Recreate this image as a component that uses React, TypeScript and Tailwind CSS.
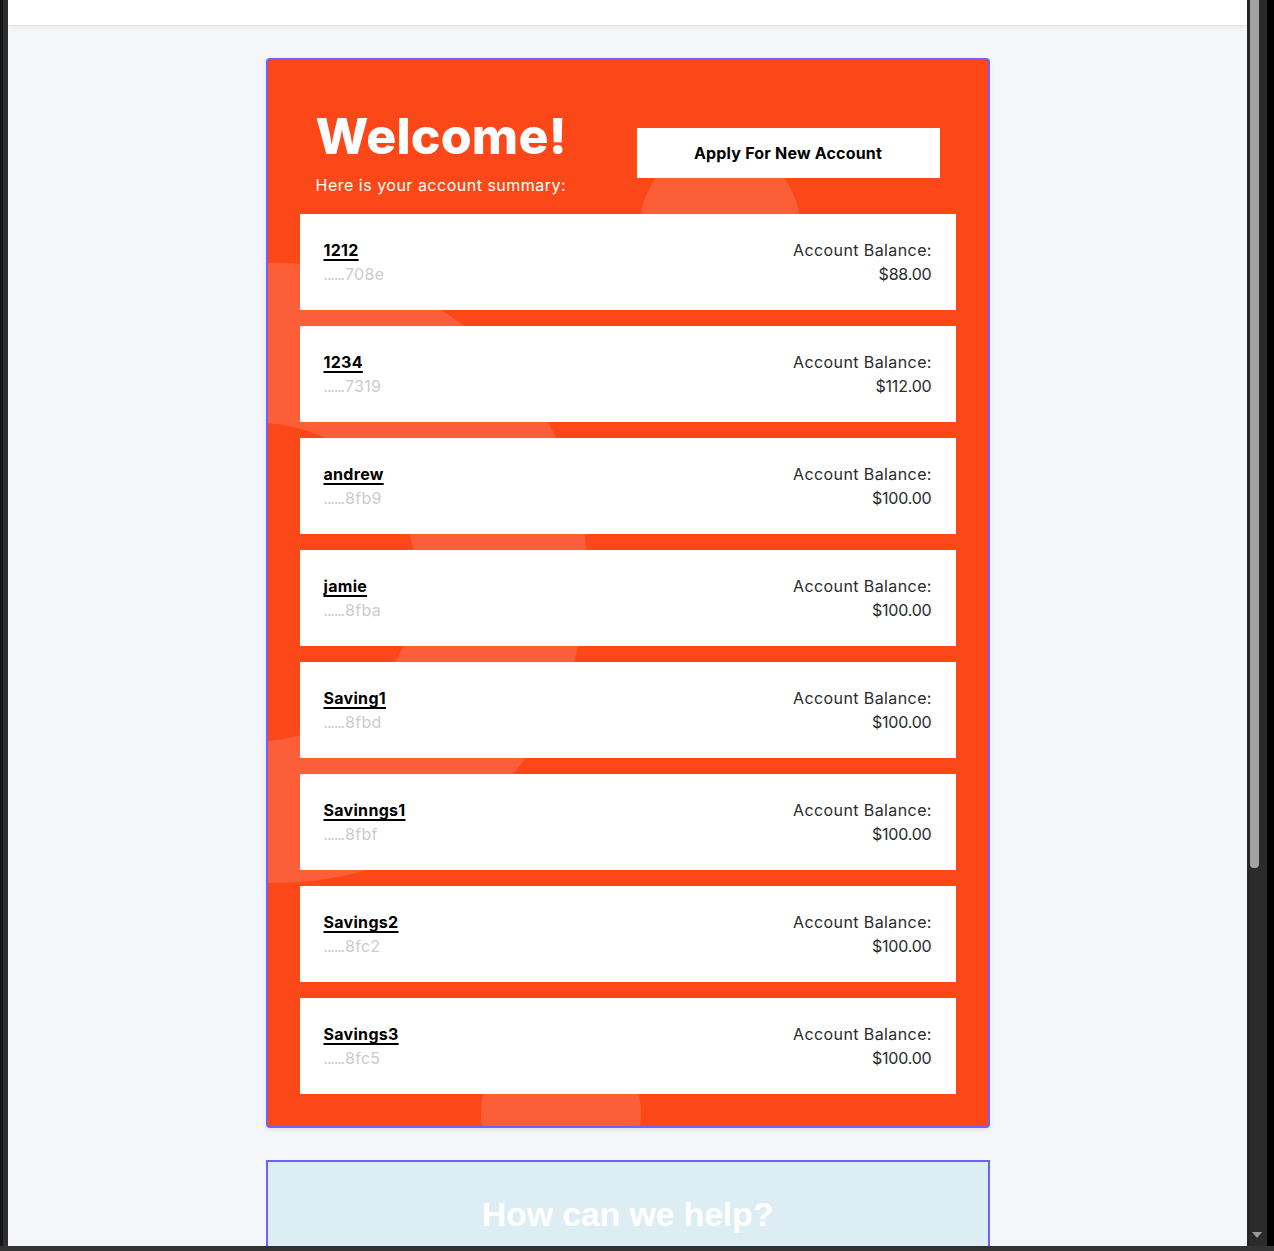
import React from "react";

type Account = {
  name: string;
  id: string;
  balance: string;
};

const accounts: Account[] = [
  { name: "1212", id: "708e", balance: "$88.00" },
  { name: "1234", id: "7319", balance: "$112.00" },
  { name: "andrew", id: "8fb9", balance: "$100.00" },
  { name: "jamie", id: "8fba", balance: "$100.00" },
  { name: "Saving1", id: "8fbd", balance: "$100.00" },
  { name: "Savinngs1", id: "8fbf", balance: "$100.00" },
  { name: "Savings2", id: "8fc2", balance: "$100.00" },
  { name: "Savings3", id: "8fc5", balance: "$100.00" },
];

const AccountCard = ({ account }: { account: Account }) => {
  return (
    <div className="relative bg-white h-24 px-6 py-6 flex justify-between">
      <div className="flex flex-col">
        <a
          href="#"
          className="text-base leading-6 font-bold text-black underline decoration-[1.5px] underline-offset-[3px] tracking-[0.3px]"
        >
          {account.name}
        </a>
        <span className="text-base leading-6 text-[#cccccc] tracking-[0.3px]">
          <span className="tracking-[-1.2px]">......</span>
          <span className="ml-[1px]">{account.id}</span>
        </span>
      </div>
      <div className="flex flex-col items-end text-base leading-6 text-[#2b2b2b]">
        <span className="tracking-[0.4px] mr-[-0.4px]">Account Balance:</span>
        <span className="tracking-[-0.2px]">{account.balance}</span>
      </div>
    </div>
  );
};

const App: React.FC = () => {
  return (
    <div className="h-[1251px] w-full flex flex-col bg-[#333333] overflow-hidden font-['Inter',sans-serif]">
      <div className="flex h-[1246px]">
        {/* window edge */}
        <div className="w-2 flex">
          <div className="w-[3px] bg-[#161616]" />
          <div className="flex-1 bg-[#2e2e2e]" />
        </div>

        <div className="flex-1 bg-[#f5f6fa] flex flex-col overflow-hidden">
          <div className="h-[26px] bg-white border-b border-[#e2e2ea] shadow-[0_2px_6px_rgba(0,0,0,0.04)] shrink-0" />

          <div className="pt-8 flex flex-col items-center">
            <div className="relative w-[724px] border-2 border-[#6c63ff] rounded-[4px] bg-[#fc4718] pt-10 px-8 pb-8 overflow-hidden shadow-[0_2px_4px_rgba(0,0,0,0.08)]">
              {/* background decoration */}
              <div className="absolute left-[-301px] top-[203px] w-[620px] h-[620px] rounded-full bg-[#fc5e38]" />
              <div className="absolute left-[-169px] top-[363px] w-[318px] h-[318px] rounded-full bg-[#fc4718]" />
              <div className="absolute left-[372px] top-[86px] w-[160px] h-[160px] rounded-full bg-[#fc5e38]" />
              <div className="absolute left-[213px] top-[973px] w-[160px] h-[160px] rounded-full bg-[#fc5e38]" />

              <div className="relative flex justify-between items-start px-4 mb-[17px]">
                <div className="flex flex-col">
                  <h1 className="text-[50px] leading-[72px] font-extrabold text-white tracking-[0.2px]">
                    Welcome!
                  </h1>
                  <p className="text-base leading-6 text-white tracking-[0.5px] pt-[1px]">
                    Here is your account summary:
                  </p>
                </div>
                <button className="mt-7 w-[303px] h-[50px] bg-white text-black text-base font-bold tracking-[0.2px]">
                  Apply For New Account
                </button>
              </div>

              <div className="relative flex flex-col gap-4">
                {accounts.map((account) => (
                  <AccountCard key={account.name} account={account} />
                ))}
              </div>
            </div>

            <div className="mt-8 w-[724px] h-[200px] border-2 border-[#6c63ff] bg-[#ddedf4] pt-8 flex justify-center">
              <h2 className="text-[34px] leading-10 font-bold text-white tracking-[-0.2px] font-['Liberation_Sans',sans-serif]">
                How can we help?
              </h2>
            </div>
          </div>
        </div>

        {/* scrollbar */}
        <div className="w-[27px] flex">
          <div className="w-[3px] bg-[#252525]" />
          <div className="w-[17px] bg-[#2b2b2b] flex flex-col justify-between">
            <div className="w-[9px] h-[868px] bg-[#a3a3a3] rounded-b-[4px]" />
            <div className="pb-2 pl-[2px]">
              <svg width="10" height="6" viewBox="0 0 10 6">
                <path d="M0 0 L10 0 L5 6 Z" fill="#9a9a9a" />
              </svg>
            </div>
          </div>
          <div className="flex-1 bg-black" />
        </div>
      </div>
      <div className="flex-1 bg-[#333333]" />
    </div>
  );
};

export default App;
